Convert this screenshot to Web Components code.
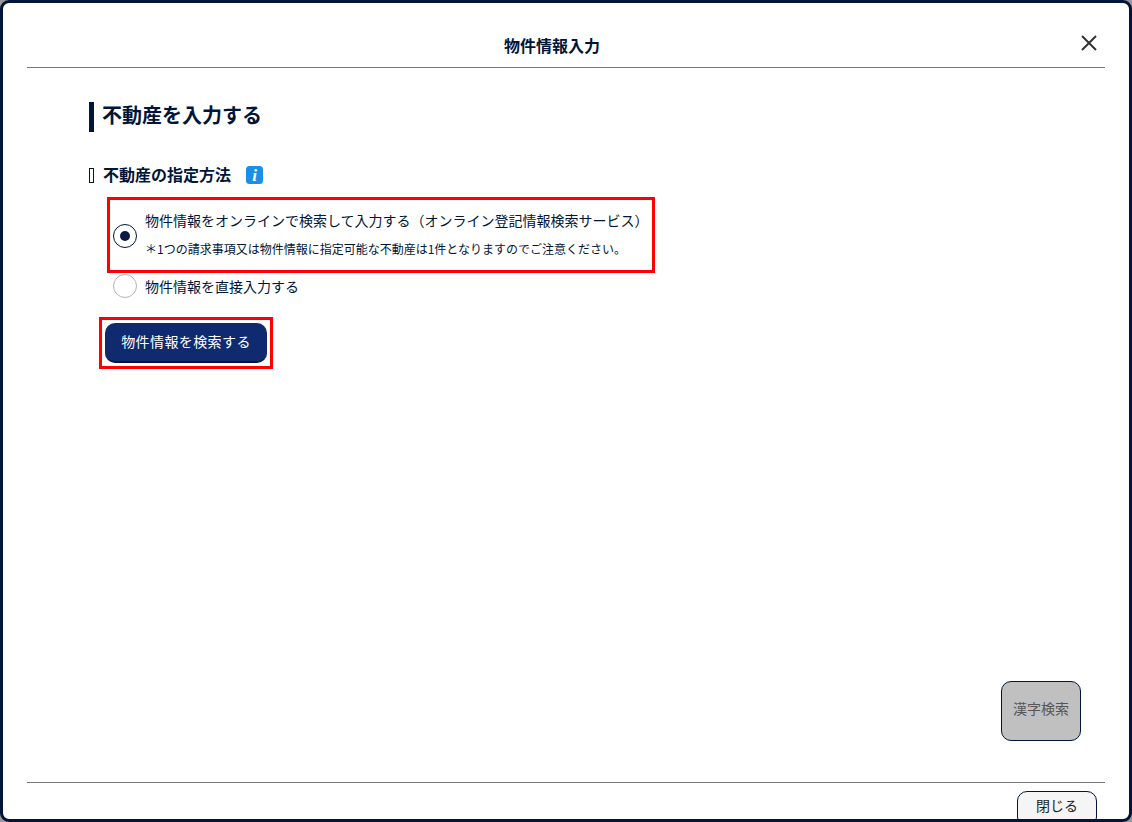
<!DOCTYPE html>
<html lang="ja">
<head>
<meta charset="utf-8">
<title>物件情報入力</title>
<style>
  html, body { margin: 0; height: 100%; background: #999; }
  body { font-family: "Noto Sans CJK JP", "Noto Sans", sans-serif; color: #001538; }
</style>
</head>
<body>
<property-modal heading="物件情報入力">
  <section-title>不動産を入力する</section-title>
  <method-label>不動産の指定方法</method-label>
  <red-mark class="first">
    <radio-option checked>
      物件情報をオンラインで検索して入力する（オンライン登記情報検索サービス）
      <span slot="note">＊1つの請求事項又は物件情報に指定可能な不動産は1件となりますのでご注意ください。</span>
    </radio-option>
  </red-mark>
  <radio-option class="second">物件情報を直接入力する</radio-option>
  <red-mark class="second">
    <search-button>物件情報を検索する</search-button>
  </red-mark>
  <kanji-button slot="aside">漢字検索</kanji-button>
  <close-button slot="footer">閉じる</close-button>
</property-modal>

<script>
class PropertyModal extends HTMLElement {
  constructor() {
    super();
    this.attachShadow({ mode: 'open' });
    this.shadowRoot.innerHTML = `
      <style>
        :host {
          display: flex;
          flex-direction: column;
          box-sizing: border-box;
          width: 1132px;
          height: 822px;
          border: 3px solid #001538;
          border-radius: 9px;
          overflow: hidden;
          background: #fff;
        }
        header {
          flex: none;
          margin: 0 24px;
          border-bottom: 1px solid #777;
          box-sizing: border-box;
          height: 65px;
          padding-right: 28px;
          display: flex;
          align-items: flex-end;
          justify-content: center;
          position: relative;
        }
        h1 {
          margin: 0 0 10px;
          font-size: 16px;
          line-height: 24px;
          font-weight: 700;
        }
        .close {
          position: absolute;
          right: 7px;
          top: 31px;
          width: 18px;
          height: 18px;
        }
        main {
          flex: 1;
          min-height: 0;
          display: flex;
          flex-direction: column;
          padding: 34px 48px 0 86px;
        }
        .content { flex: 1; }
        .aside {
          display: flex;
          justify-content: flex-end;
          margin-bottom: 41px;
        }
        footer {
          flex: none;
          height: 37px;
          margin: 0 24px;
          border-top: 1px solid #777;
          display: flex;
          justify-content: flex-end;
          padding: 8px 8px 0 0;
          box-sizing: border-box;
        }
      </style>
      <header>
        <h1></h1>
        <svg class="close" viewBox="0 0 18 18" fill="none" stroke="#333" stroke-width="2">
          <path d="M2 2 L16 16 M16 2 L2 16"/>
        </svg>
      </header>
      <main>
        <div class="content"><slot></slot></div>
        <div class="aside"><slot name="aside"></slot></div>
      </main>
      <footer><slot name="footer"></slot></footer>
    `;
    this.shadowRoot.querySelector('h1').textContent = this.getAttribute('heading');
  }
}

class SectionTitle extends HTMLElement {
  constructor() {
    super();
    this.attachShadow({ mode: 'open' });
    this.shadowRoot.innerHTML = `
      <style>
        :host {
          display: block;
          box-sizing: border-box;
          height: 30px;
          border-left: 5px solid #001538;
          padding-left: 8px;
          font-size: 20px;
          font-weight: 700;
          line-height: 25px;
        }
      </style>
      <slot></slot>
    `;
  }
}

class MethodLabel extends HTMLElement {
  constructor() {
    super();
    this.attachShadow({ mode: 'open' });
    this.shadowRoot.innerHTML = `
      <style>
        :host {
          display: flex;
          align-items: center;
          height: 24px;
          margin-top: 31px;
          font-size: 16px;
          font-weight: 700;
        }
        .label { margin-top: -2px; }
        .box {
          box-sizing: border-box;
          width: 5px;
          height: 15px;
          border: 1px solid #001538;
          margin-right: 9px;
          margin-top: 1px;
        }
        svg { margin-left: 15px; width: 18px; height: 18px; }
        text {
          font-family: "Liberation Serif", serif;
          font-style: italic;
          font-weight: 700;
          font-size: 17px;
          fill: #fff;
        }
      </style>
      <span class="box"></span>
      <span class="label"><slot></slot></span>
      <svg viewBox="0 0 18 18">
        <rect width="17" height="18" rx="3.5" fill="#1a8fe8"/>
        <text x="8.5" y="14.5" text-anchor="middle">i</text>
      </svg>
    `;
  }
}

class RedMark extends HTMLElement {
  constructor() {
    super();
    this.attachShadow({ mode: 'open' });
    this.shadowRoot.innerHTML = `
      <style>
        :host {
          display: block;
          box-sizing: border-box;
          width: fit-content;
          border: 3px solid #f00;
        }
        :host(.first) {
          margin: 10px 0 0 18px;
          width: 548px;
          height: 76px;
          padding: 8px 0 0 3px;
        }
        :host(.second) {
          margin: 19px 0 0 10px;
          padding: 3px;
        }
      </style>
      <slot></slot>
    `;
  }
}

class RadioOption extends HTMLElement {
  constructor() {
    super();
    this.attachShadow({ mode: 'open' });
    const checked = this.hasAttribute('checked');
    this.shadowRoot.innerHTML = `
      <style>
        :host {
          display: flex;
          align-items: center;
          gap: 8px;
          font-size: 14px;
          line-height: 24px;
        }
        :host(.second) {
          margin: 1px 0 0 24px;
        }
        :host([checked]) .circle { margin-top: 6px; }
        .circle {
          flex: none;
          box-sizing: border-box;
          width: 24px;
          height: 24px;
          border-radius: 50%;
          border: 1.5px solid ${checked ? '#001538' : '#b4b4b4'};
          background: #fff;
          display: flex;
          align-items: center;
          justify-content: center;
        }
        .dot {
          width: 10px;
          height: 10px;
          border-radius: 50%;
          background: #0b1a45;
        }
        .note {
          display: block;
          font-size: 12px;
          line-height: 18px;
          margin-top: 8px;
          white-space: nowrap;
        }
      </style>
      <span class="circle">${checked ? '<span class="dot"></span>' : ''}</span>
      <span>
        <slot></slot>
        ${checked ? '<span class="note"><slot name="note"></slot></span>' : ''}
      </span>
    `;
  }
}

class SearchButton extends HTMLElement {
  constructor() {
    super();
    this.attachShadow({ mode: 'open' });
    this.shadowRoot.innerHTML = `
      <style>
        :host {
          display: flex;
          align-items: center;
          justify-content: center;
          box-sizing: border-box;
          width: 162px;
          height: 40px;
          padding-bottom: 2px;
          border-radius: 10px;
          background: #102a70;
          border-bottom: 2px solid #001538;
          color: #fff;
          font-size: 14px;
          letter-spacing: 0.4px;
        }
      </style>
      <slot></slot>
    `;
  }
}

class KanjiButton extends HTMLElement {
  constructor() {
    super();
    this.attachShadow({ mode: 'open' });
    this.shadowRoot.innerHTML = `
      <style>
        :host {
          display: flex;
          align-items: center;
          justify-content: center;
          box-sizing: border-box;
          width: 80px;
          height: 60px;
          padding-bottom: 6px;
          border: 1px solid #001538;
          border-radius: 10px;
          background: #c0c0c0;
          color: #555;
          font-size: 14px;
        }
      </style>
      <slot></slot>
    `;
  }
}

class CloseButton extends HTMLElement {
  constructor() {
    super();
    this.attachShadow({ mode: 'open' });
    this.shadowRoot.innerHTML = `
      <style>
        :host {
          display: flex;
          align-items: center;
          justify-content: center;
          flex: none;
          box-sizing: border-box;
          width: 80px;
          height: 36px;
          padding-bottom: 8px;
          border: 1px solid #001538;
          border-radius: 10px;
          background: #f5f5f5;
          color: #222;
          font-size: 14px;
        }
      </style>
      <slot></slot>
    `;
  }
}

customElements.define('property-modal', PropertyModal);
customElements.define('section-title', SectionTitle);
customElements.define('method-label', MethodLabel);
customElements.define('red-mark', RedMark);
customElements.define('radio-option', RadioOption);
customElements.define('search-button', SearchButton);
customElements.define('kanji-button', KanjiButton);
customElements.define('close-button', CloseButton);
</script>
</body>
</html>
